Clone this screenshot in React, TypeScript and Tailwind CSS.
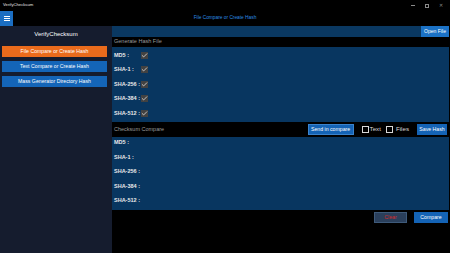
import { Check } from 'lucide-react';

const FONT = { fontFamily: '"Liberation Sans", Arial, sans-serif' };

const hashes = ['MD5', 'SHA-1', 'SHA-256', 'SHA-384', 'SHA-512'];

const navItems = [
  { label: 'File Compare or Create Hash', active: true },
  { label: 'Text Compare or Create Hash', active: false },
  { label: 'Mass Generator Directory Hash', active: false },
];

function Tick() {
  return (
    <span className="flex h-[7px] w-[7px] items-center justify-center bg-[#424242]">
      <Check size={7} strokeWidth={2.5} className="text-[#f2f2f2]" />
    </span>
  );
}

function Box() {
  return <span className="block h-[7px] w-[7px] border border-[#d8d8d8]" />;
}

export default function App() {
  return (
    <div className="flex h-[253px] w-[450px] flex-col overflow-hidden bg-black text-white" style={FONT}>
      {/* window title bar */}
      <div className="flex h-[11px] items-center justify-between pl-[3px]">
        <span className="text-[4.2px] leading-none text-[#e6e6e6]">VerifyChecksum</span>
        <div className="flex items-center gap-[10px] pr-[7px] text-[#8a8a8a]">
          <span className="block h-[0.6px] w-[4px] bg-[#8a8a8a]" />
          <span className="block h-[4px] w-[4px] border-[0.7px] border-[#8a8a8a]" />
          <span className="text-[5px] leading-none">✕</span>
        </div>
      </div>

      {/* app header */}
      <div className="flex h-[15px] items-center">
        <div className="flex h-[15px] w-[13px] flex-col items-center justify-center gap-[1.3px] bg-[#1b6ec2]">
          <span className="block h-[0.7px] w-[6px] bg-white" />
          <span className="block h-[0.7px] w-[6px] bg-white" />
          <span className="block h-[0.7px] w-[6px] bg-white" />
        </div>
        <div className="flex-1 pr-[13px] text-center text-[4.8px] leading-none text-[#2b8be0]">
          File Compare or Create Hash
        </div>
      </div>

      <div className="flex flex-1">
        {/* sidebar */}
        <div className="flex w-[112px] flex-col gap-[4px] bg-[#151c2e] px-[2px] pb-[2px]">
          <div className="flex h-[16px] items-center justify-center text-[6px] text-white">VerifyChecksum</div>
          {navItems.map((item) => (
            <div
              key={item.label}
              className={`flex h-[11px] w-[105px] items-center justify-center text-[5.2px] leading-none text-white ${
                item.active ? 'bg-[#ea6b1c]' : 'bg-[#1465b8]'
              }`}
            >
              {item.label}
            </div>
          ))}
        </div>

        {/* main */}
        <div className="flex flex-1 flex-col pr-[1px]">
          <div className="flex h-[11px] items-stretch justify-end bg-[#0a3861]">
            <div className="flex w-[28px] items-center justify-center bg-[#1b72c6] text-[5.1px] leading-none">
              Open File
            </div>
          </div>

          <div className="flex h-[10px] items-center pl-[2px] text-[5.5px] leading-none text-[#9a9a9a]">
            Generate Hash File
          </div>

          <div className="flex h-[75px] flex-col bg-[#083660] pl-[2px] pt-[1px]">
            {hashes.map((h) => (
              <div key={h} className="flex h-[14.5px] items-center">
                <span className="w-[27px] text-[5.5px] font-bold leading-none text-[#e8e8e8]">{h} :</span>
                <Tick />
              </div>
            ))}
          </div>

          <div className="flex h-[15px] items-center pl-[2px] pr-[2px]">
            <span className="flex-1 text-[5.5px] leading-none text-[#9a9a9a]">Checksum Compare</span>
            <div className="flex h-[11px] w-[46px] items-center justify-center border-[0.5px] border-[#3b83cc] bg-[#1463b5] text-[5.2px] leading-none">
              Send in compare
            </div>
            <div className="ml-[8px] flex items-center gap-[1px]">
              <Box />
              <span className="text-[6.2px] leading-none text-[#d8d8d8]">Text</span>
            </div>
            <div className="ml-[5px] flex items-center gap-[3px]">
              <Box />
              <span className="text-[6.2px] leading-none text-[#d8d8d8]">Files</span>
            </div>
            <div className="ml-[8px] flex h-[11px] w-[30px] items-center justify-center bg-[#1463b5] text-[5.2px] leading-none">
              Save Hash
            </div>
          </div>

          <div className="flex h-[73px] flex-col bg-[#083660] pl-[2px]">
            {hashes.map((h) => (
              <div key={h} className="flex h-[14.5px] items-start pt-[2px]">
                <span className="text-[5.5px] font-bold leading-[6px] text-[#e8e8e8]">{h} :</span>
              </div>
            ))}
          </div>

          <div className="flex justify-end gap-[7px] pr-[1px] pt-[2px]">
            <div className="flex h-[11px] w-[33px] items-center justify-center border-[0.5px] border-[#3e5a7a] bg-[#2a3f5b] text-[5.2px] leading-none text-[#d42a2a]">
              Clear
            </div>
            <div className="flex h-[11px] w-[34px] items-center justify-center bg-[#1463b5] text-[5.2px] leading-none">
              Compare
            </div>
          </div>
        </div>
      </div>
    </div>
  );
}
